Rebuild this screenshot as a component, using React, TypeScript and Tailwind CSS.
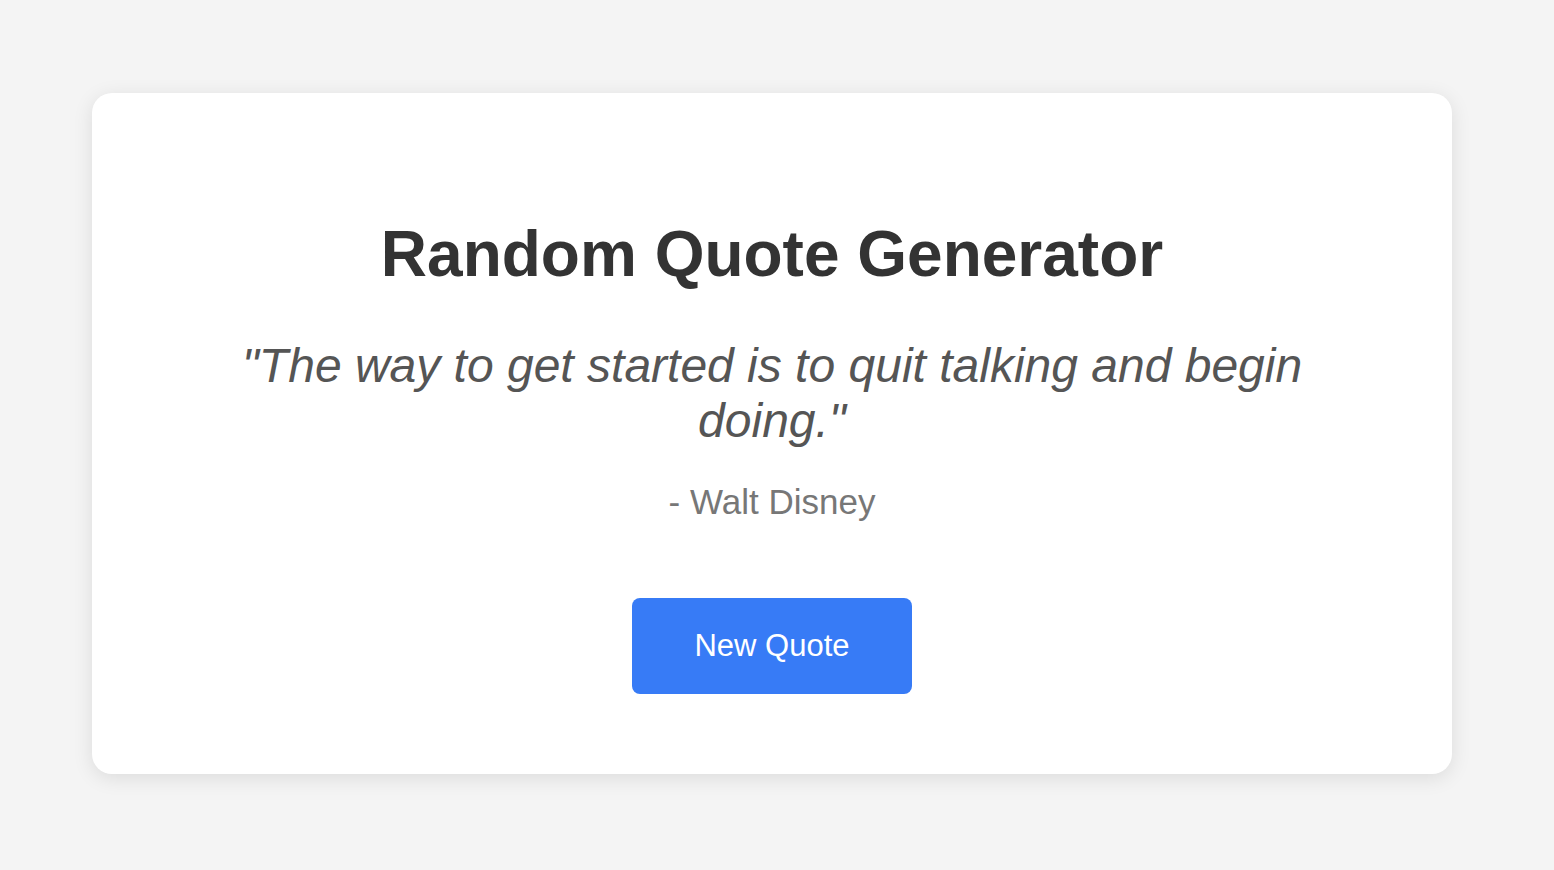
export default function App() {
  return (
    <div
      className="min-h-screen bg-[#f4f4f4] flex items-start pt-[93px] pl-[92px] pr-[102px]"
      style={{ fontFamily: '"Liberation Sans", Arial, Helvetica, sans-serif' }}
    >
      <div className="w-[1360px] h-[681px] bg-white rounded-[20px] shadow-[0_4px_20px_rgba(0,0,0,0.1)] px-[80px] pt-[123px] pb-[80px] flex flex-col items-center text-center">
        <h1 className="text-[64px] leading-[77px] font-bold text-[#333333]">Random Quote Generator</h1>
        <p className="mt-[45px] text-[48px] leading-[55px] italic text-[#555555]">
          "The way to get started is to quit talking and begin doing."
        </p>
        <p className="mt-[34px] text-[35px] leading-[40px] text-[#777777]">- Walt Disney</p>
        <button className="mt-[76px] w-[280px] h-[96px] rounded-[8px] bg-[#377bf6] text-white text-[31px]">
          New Quote
        </button>
      </div>
    </div>
  );
}
